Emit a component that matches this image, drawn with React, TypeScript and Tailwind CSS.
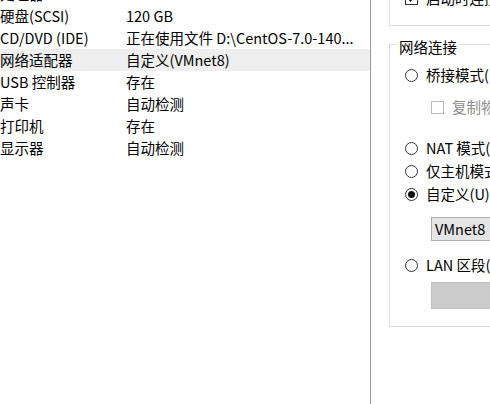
import React from "react";

const font = { fontFamily: '"Noto Sans CJK SC", "Noto Sans", sans-serif' };

const devices: [string, string][] = [
  ["处理器", ""],
  ["硬盘(SCSI)", "120 GB"],
  ["CD/DVD (IDE)", "正在使用文件 D:\\CentOS-7.0-140..."],
  ["网络适配器", "自定义(VMnet8)"],
  ["USB 控制器", "存在"],
  ["声卡", "自动检测"],
  ["打印机", "存在"],
  ["显示器", "自动检测"],
];

function Radio({ checked = false }: { checked?: boolean }) {
  return (
    <span className="flex h-[13px] w-[13px] shrink-0 items-center justify-center rounded-full border border-[#333333] bg-white">
      {checked && <span className="h-[7px] w-[7px] rounded-full bg-[#111111]" />}
    </span>
  );
}

function RadioRow({ label, checked, className }: { label: string; checked?: boolean; className: string }) {
  return (
    <div className={`flex h-[22px] items-center gap-[8px] whitespace-nowrap pl-[15px] ${className}`}>
      <Radio checked={checked} />
      <span>{label}</span>
    </div>
  );
}

export default function App() {
  return (
    <div
      className="flex h-[404px] w-[490px] overflow-hidden bg-white text-[14.5px] text-black"
      style={font}
    >
      {/* device list */}
      <div className="w-[370px] shrink-0">
        <div className="mt-[-17px]">
          {devices.map(([name, value]) => (
            <div
              key={name}
              className={`grid h-[22px] grid-cols-[126px_1fr] items-center whitespace-nowrap leading-[22px] ${
                name === "网络适配器" ? "bg-[#efefef]" : ""
              }`}
            >
              <span>{name}</span>
              <span>{value}</span>
            </div>
          ))}
        </div>
      </div>

      {/* settings */}
      <div className="min-w-0 flex-1 overflow-hidden border-l border-[#9b9aab] pl-[18px]">
        <div className="mt-[-22px] h-[48px] w-[200px] border border-[#dcdcdc] pl-[15px] pt-[8px]">
          <div className="flex h-[22px] items-center gap-[8px] whitespace-nowrap">
            <span className="flex h-[13px] w-[13px] shrink-0 items-center justify-center border border-[#333333] bg-white">
              <svg width="9" height="9" viewBox="0 0 9 9">
                <path d="M1 4.5 L3.5 7 L8 1.5" fill="none" stroke="#222" strokeWidth="1.3" />
              </svg>
            </span>
            <span>启动时连接(O)</span>
          </div>
        </div>

        <fieldset className="mt-[7px] w-[200px] border border-[#dcdcdc] pb-[17px]">
          <legend className="ml-[7px] px-[2px] pt-[6px] leading-[16px]">网络连接</legend>
          <RadioRow className="mt-[9px]" label="桥接模式(B): 直接连接物理网络" />
          <div className="mt-[10px] flex h-[22px] items-center gap-[8px] whitespace-nowrap pl-[41px] text-[#8d8d8d]">
            <span className="h-[13px] w-[13px] shrink-0 border border-[#bcbcbc] bg-white" />
            <span>复制物理网络连接状态(P)</span>
          </div>
          <RadioRow className="mt-[19px]" label="NAT 模式(N): 用于共享主机的 IP 地址" />
          <RadioRow className="mt-[1px]" label="仅主机模式(H): 与主机共享的专用网络" />
          <RadioRow className="mt-[1px]" label="自定义(U): 特定虚拟网络" checked />
          <div className="ml-[41px] mt-[12px] flex h-[24px] items-center border border-[#adadad] bg-[#e5e5e5] pl-[3px]">
            VMnet8
          </div>
          <RadioRow className="mt-[13px]" label="LAN 区段(L):" />
          <div className="ml-[41px] mt-[6px] h-[27px] border border-[#bfbfbf] bg-[#cccccc]" />
        </fieldset>
      </div>
    </div>
  );
}
